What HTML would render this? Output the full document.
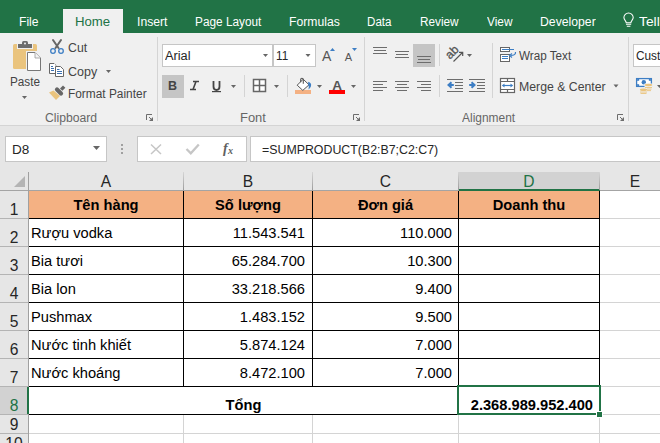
<!DOCTYPE html><html><head><meta charset="utf-8"><style>
*{margin:0;padding:0;box-sizing:border-box}
html,body{width:660px;height:443px;overflow:hidden;background:#fff;font-family:"Liberation Sans",sans-serif}
.a{position:absolute}
.lb{position:absolute;white-space:nowrap;line-height:1;transform-origin:0 0}
.ct{position:absolute;font-size:14.67px;color:#000;white-space:nowrap;line-height:1}
svg{position:absolute;left:0;top:0;overflow:visible}
.hdr{position:absolute;background:#e6e6e6}
.hl{position:absolute;background:#c6c6c6}
.gl{position:absolute;background:#d4d4d4}
.bl{position:absolute;background:#000}
</style></head><body>
<div class="a" style="left:0;top:0;width:660px;height:33px;background:#217346"></div>
<div class="a" style="left:63px;top:9px;width:60px;height:24px;background:#f0f0f0"></div>
<div class="a" style="left:0;top:33px;width:660px;height:92px;background:#f0f0f0"></div>
<div class="a" style="left:0;top:125px;width:660px;height:1px;background:#d4d4d4"></div>
<div class="a" style="left:0;top:126px;width:660px;height:46px;background:#e6e6e6"></div>
<div class="a" style="left:162px;top:44px;width:111px;height:23px;background:#fff;border:1px solid #c6c6c6"></div>
<div class="a" style="left:273px;top:44px;width:43px;height:23px;background:#fff;border:1px solid #c6c6c6"></div>
<div class="a" style="left:633px;top:44px;width:48px;height:23px;background:#fff;border:1px solid #c6c6c6"></div>
<div class="a" style="left:162px;top:75px;width:22px;height:23px;background:#c5c5c5"></div>
<div class="a" style="left:413px;top:44px;width:22px;height:23px;background:#c5c5c5"></div>
<div class="a" style="left:157px;top:37px;width:1px;height:84px;background:#d4d4d4"></div>
<div class="a" style="left:364px;top:37px;width:1px;height:84px;background:#d4d4d4"></div>
<div class="a" style="left:628px;top:37px;width:1px;height:84px;background:#d4d4d4"></div>
<div class="a" style="left:244px;top:75px;width:1px;height:22px;background:#d4d4d4"></div>
<div class="a" style="left:287px;top:75px;width:1px;height:22px;background:#d4d4d4"></div>
<div class="a" style="left:439px;top:44px;width:1px;height:22px;background:#d4d4d4"></div>
<div class="a" style="left:439px;top:75px;width:1px;height:22px;background:#d4d4d4"></div>
<div class="a" style="left:492px;top:43px;width:1px;height:55px;background:#d4d4d4"></div>
<div class="a" style="left:5px;top:136px;width:102px;height:26px;background:#fff;border:1px solid #c6c6c6"></div>
<div class="a" style="left:137px;top:136px;width:110px;height:26px;background:#fff;border:1px solid #c6c6c6"></div>
<div class="a" style="left:250px;top:136px;width:431px;height:26px;background:#fff;border:1px solid #c6c6c6"></div>
<div class="lb" style="left:19.33px;top:16px;font-size:12.5px;font-weight:normal;color:#fff;transform:scaleX(0.9722)">File</div>
<div class="lb" style="left:75.45px;top:16px;font-size:12.5px;font-weight:normal;color:#217346;transform:scaleX(1.0548)">Home</div>
<div class="lb" style="left:137.32px;top:16px;font-size:12.5px;font-weight:normal;color:#fff;transform:scaleX(0.9759)">Insert</div>
<div class="lb" style="left:195.45px;top:16px;font-size:12.5px;font-weight:normal;color:#fff;transform:scaleX(0.9456)">Page Layout</div>
<div class="lb" style="left:289.23px;top:16px;font-size:12.5px;font-weight:normal;color:#fff;transform:scaleX(0.9740)">Formulas</div>
<div class="lb" style="left:367.47px;top:16px;font-size:12.5px;font-weight:normal;color:#fff;transform:scaleX(0.9280)">Data</div>
<div class="lb" style="left:420.46px;top:16px;font-size:12.5px;font-weight:normal;color:#fff;transform:scaleX(0.9410)">Review</div>
<div class="lb" style="left:486.90px;top:16px;font-size:12.5px;font-weight:normal;color:#fff;transform:scaleX(0.9462)">View</div>
<div class="lb" style="left:539.72px;top:16px;font-size:12.5px;font-weight:normal;color:#fff;transform:scaleX(0.9782)">Developer</div>
<div class="lb" style="left:639.20px;top:16px;font-size:12.5px;font-weight:normal;color:#fff;transform:scaleX(1.1059)">Tell</div>
<div class="lb" style="left:68.22px;top:42px;font-size:12.5px;font-weight:normal;color:#444;transform:scaleX(0.9833)">Cut</div>
<div class="lb" style="left:68.00px;top:66px;font-size:12.5px;font-weight:normal;color:#444;transform:scaleX(1.0000)">Copy</div>
<div class="lb" style="left:68.05px;top:88px;font-size:12.5px;font-weight:normal;color:#444;transform:scaleX(0.9506)">Format Painter</div>
<div class="lb" style="left:10.36px;top:76px;font-size:12.5px;font-weight:normal;color:#444;transform:scaleX(0.9400)">Paste</div>
<div class="lb" style="left:44.63px;top:112px;font-size:12.5px;font-weight:normal;color:#666;transform:scaleX(0.9745)">Clipboard</div>
<div class="lb" style="left:240.17px;top:112px;font-size:12.5px;font-weight:normal;color:#666;transform:scaleX(1.0348)">Font</div>
<div class="lb" style="left:462.10px;top:112px;font-size:12.5px;font-weight:normal;color:#666;transform:scaleX(0.9564)">Alignment</div>
<div class="lb" style="left:518.80px;top:50px;font-size:12.5px;font-weight:normal;color:#444;transform:scaleX(0.9345)">Wrap Text</div>
<div class="lb" style="left:518.52px;top:81px;font-size:12.5px;font-weight:normal;color:#444;transform:scaleX(0.9826)">Merge &amp; Center</div>
<div class="lb" style="left:165.10px;top:50px;font-size:12.5px;font-weight:normal;color:#262626;transform:scaleX(1.0217)">Arial</div>
<div class="lb" style="left:275.76px;top:50px;font-size:12.5px;font-weight:normal;color:#262626;transform:scaleX(0.9364)">11</div>
<div class="lb" style="left:636.35px;top:50px;font-size:12.5px;font-weight:normal;color:#262626;transform:scaleX(0.9458)">Cust</div>
<div class="lb" style="left:11.71px;top:144px;font-size:12.5px;font-weight:normal;color:#262626;transform:scaleX(1.0857)">D8</div>
<div class="lb" style="left:262.00px;top:144px;font-size:12.5px;font-weight:normal;color:#262626;transform:scaleX(0.9887)">=SUMPRODUCT(B2:B7;C2:C7)</div>
<svg width="660" height="443" style="z-index:2"><polygon points="22,96 27,96 24.5,99" fill="#666"/><polygon points="106,70 111,70 108.5,73" fill="#666"/><polygon points="263,54 268,54 265.5,57" fill="#666"/><polygon points="305.5,54 310.5,54 308.0,57" fill="#666"/><polygon points="231,85 236,85 233.5,88" fill="#666"/><polygon points="274,85 279,85 276.5,88" fill="#666"/><polygon points="317,85 322,85 319.5,88" fill="#666"/><polygon points="351,85 356,85 353.5,88" fill="#666"/><polygon points="467,54 472,54 469.5,57" fill="#666"/><polygon points="613.5,84.5 618.5,84.5 616.0,87.5" fill="#666"/><polygon points="657,85 662,85 659.5,88" fill="#666"/><polygon points="93,146 100,146 96.5,150" fill="#666"/><rect x="13" y="44" width="24" height="25" rx="1.5" fill="#eac47e"/><rect x="17" y="43" width="16" height="6" fill="#f0f0f0"/><rect x="18" y="44" width="14" height="4" fill="#6d6d6d"/><rect x="22" y="41" width="6" height="5" rx="1.5" fill="#6d6d6d"/><circle cx="25" cy="43.5" r="1" fill="#f0f0f0"/><rect x="26" y="51" width="17" height="21" fill="#f0f0f0"/><path d="M27.5,52.5 H35 L40.5,58 V70.5 H27.5 Z" fill="#fff" stroke="#777"/><path d="M35,52.5 V58 H40.5" fill="#f4f4f4" stroke="#999" stroke-width="0.8"/><path d="M53,40 L58.5,48 M61,40 L55.5,48" stroke="#666" stroke-width="2" stroke-linecap="round"/><circle cx="53" cy="51" r="2.3" fill="none" stroke="#3d7ec4" stroke-width="1.3"/><circle cx="61" cy="51" r="2.3" fill="none" stroke="#3d7ec4" stroke-width="1.3"/><path d="M49.5,63.5 H54 L56,65.5 M49.5,63.5 V73.5 H55" fill="none" stroke="#666"/><rect x="50" y="64" width="5" height="9" fill="#fff"/><path d="M55.5,66.5 H60.5 L63.5,69.5 V76.5 H55.5 Z" fill="#fff" stroke="#666"/><path d="M51,66.5 H53 M51,68.5 H54 M51,70.5 H54 M57,69.5 H59.5 M57,71.5 H62 M57,73.5 H62" stroke="#3a6fb0" stroke-width="1"/><polygon points="49,92.5 53.5,90.5 60,96 56,100" fill="#eac47e"/><path d="M57,89.5 L61,93.5" stroke="#666" stroke-width="4.2" stroke-linecap="round"/><path d="M61.2,89.6 L64.2,86.6" stroke="#666" stroke-width="3.4" stroke-linecap="butt"/><path d="M253.5,79.5 H265.5 V91.5 H253.5 Z M259.5,79.5 V91.5 M253.5,85.5 H265.5" fill="#fff" stroke="#666" stroke-width="1.5"/><rect x="295" y="90" width="16" height="4" fill="#f4b183"/><polygon points="297.2,85.2 303.2,79.2 309,84.8 302.8,90.4" fill="#fff" stroke="#555" stroke-width="1"/><path d="M300.7,82.3 V79.4 Q300.7,78.2 301.9,78.2 Q303.3,78.2 303.3,79.4 V83.8" fill="none" stroke="#555" stroke-width="1.1"/><path d="M308.2,81.8 Q312,82.8 310.9,86.6 Q310.3,88.2 308.5,89.5 Q309.4,86.2 308.2,85 Z" fill="#3d7ec4"/><rect x="329" y="90" width="16" height="4" fill="#f00"/><text x="332.3" y="89.7" font-family="Liberation Sans" font-weight="bold" font-size="13.5" fill="#555">A</text><text x="322" y="60.7" font-family="Liberation Sans" font-size="14" fill="#555">A</text><polygon points="330,51 335,51 332.5,48" fill="#3d7ec4"/><text x="344.8" y="60.7" font-family="Liberation Sans" font-size="11" fill="#555">A</text><polygon points="352,48 357,48 354.5,51" fill="#3d7ec4"/><rect x="373" y="47" width="14" height="1" fill="#6d6d6d"/><rect x="374" y="50" width="12" height="1" fill="#6d6d6d"/><rect x="373" y="53" width="14" height="1" fill="#6d6d6d"/><rect x="395" y="51" width="14" height="1" fill="#6d6d6d"/><rect x="396" y="54" width="12" height="1" fill="#6d6d6d"/><rect x="395" y="57" width="14" height="1" fill="#6d6d6d"/><rect x="417" y="56" width="14" height="1" fill="#6d6d6d"/><rect x="418" y="59" width="12" height="1" fill="#6d6d6d"/><rect x="417" y="62" width="14" height="1" fill="#6d6d6d"/><rect x="373" y="81" width="14" height="1" fill="#6d6d6d"/><rect x="395" y="81" width="14" height="1" fill="#6d6d6d"/><rect x="417" y="81" width="14" height="1" fill="#6d6d6d"/><rect x="373" y="84" width="10" height="1" fill="#6d6d6d"/><rect x="397" y="84" width="10" height="1" fill="#6d6d6d"/><rect x="421" y="84" width="10" height="1" fill="#6d6d6d"/><rect x="373" y="87" width="14" height="1" fill="#6d6d6d"/><rect x="395" y="87" width="14" height="1" fill="#6d6d6d"/><rect x="417" y="87" width="14" height="1" fill="#6d6d6d"/><rect x="373" y="90" width="10" height="1" fill="#6d6d6d"/><rect x="397" y="90" width="10" height="1" fill="#6d6d6d"/><rect x="421" y="90" width="10" height="1" fill="#6d6d6d"/><rect x="447" y="79" width="16" height="1" fill="#6d6d6d"/><rect x="447" y="91" width="16" height="1" fill="#6d6d6d"/><rect x="455" y="82" width="8" height="1" fill="#6d6d6d"/><rect x="455" y="85" width="8" height="1" fill="#6d6d6d"/><rect x="455" y="88" width="8" height="1" fill="#6d6d6d"/><rect x="469" y="79" width="16" height="1" fill="#6d6d6d"/><rect x="469" y="91" width="16" height="1" fill="#6d6d6d"/><rect x="477" y="82" width="8" height="1" fill="#6d6d6d"/><rect x="477" y="85" width="8" height="1" fill="#6d6d6d"/><rect x="477" y="88" width="8" height="1" fill="#6d6d6d"/><path d="M453.8,85 H449 M451.5,82.2 L448.5,85 L451.5,87.8" fill="none" stroke="#3d7ec4" stroke-width="2"/><path d="M469.2,85 H474 M471.5,82.2 L474.5,85 L471.5,87.8" fill="none" stroke="#3d7ec4" stroke-width="2"/><text x="0" y="0" font-family="Liberation Sans" font-size="12" fill="#555" stroke="#555" stroke-width="0.35" transform="translate(450.1,59.7) rotate(-45)">ab</text><path d="M453.5,61.5 L462.5,52.5 M459,52.3 H462.7 V56" fill="none" stroke="#555" stroke-width="1.2"/><rect x="500.5" y="47.5" width="9" height="4" fill="#fff" stroke="#666"/><rect x="500.5" y="54.5" width="9" height="7" fill="#fff" stroke="#666"/><rect x="502" y="49" width="12" height="1" fill="#3d7ec4"/><rect x="502" y="56" width="6" height="1" fill="#3d7ec4"/><rect x="502" y="58" width="6" height="1" fill="#3d7ec4"/><path d="M515.5,52 Q516,55.5 510.5,55.5" fill="none" stroke="#3d7ec4" stroke-width="1.2"/><path d="M512,53.5 L509.5,55.5 L512,57.5" fill="none" stroke="#3d7ec4" stroke-width="1.2"/><rect x="500.5" y="78.5" width="14" height="14" fill="#fff" stroke="#666" stroke-width="1.2"/><path d="M500.5,81.5 H514.5 M500.5,89.5 H514.5 M507.5,78.5 V81.5 M507.5,89.5 V92.5" stroke="#666" stroke-width="1.2"/><path d="M502.5,85.5 H512.5" stroke="#3d7ec4" stroke-width="1.2"/><polygon points="502,85.5 504.5,83.5 504.5,87.5" fill="#3d7ec4"/><polygon points="513,85.5 510.5,83.5 510.5,87.5" fill="#3d7ec4"/><rect x="636.6" y="78.6" width="14.8" height="7.8" fill="#fff" stroke="#3d7ec4" stroke-width="1.3"/><path d="M637,80 h1.5 v-1 M651,80 h-1.5 v-1 M637,85 h1.5 v1 M651,85 h-1.5 v1" stroke="#3d7ec4" stroke-width="1.3" fill="none"/><circle cx="643.8" cy="82.3" r="2.2" fill="#3d7ec4"/><rect x="644.5" y="83.5" width="8" height="8" fill="#f0f0f0"/><ellipse cx="648.5" cy="85" rx="3.6" ry="1.2" fill="#eac47e"/><rect x="645" y="87" width="7" height="0.9" fill="#eac47e"/><rect x="645.5" y="88.6" width="6" height="0.9" fill="#eac47e"/><rect x="646" y="90.2" width="5" height="0.9" fill="#eac47e"/><rect x="639" y="88" width="8" height="7" fill="#f0f0f0"/><ellipse cx="643.5" cy="89.8" rx="3.6" ry="1.2" fill="#eac47e"/><rect x="640" y="91.6" width="7" height="0.9" fill="#eac47e"/><rect x="640.5" y="93.1" width="6" height="0.9" fill="#eac47e"/><path d="M626.2,22.8 C626.2,20.8 623.9,19.8 623.9,17.6 A4.65,4.65 0 1 1 633.2,17.6 C633.2,19.8 630.9,20.8 630.9,22.8 Z" fill="none" stroke="#fff" stroke-width="1.05"/><path d="M626,24.3 H631.2 M626.8,26.3 H630.4" stroke="#fff" stroke-width="1.1"/><path d="M146.5,120 V114.5 H152" fill="none" stroke="#6d6d6d" stroke-width="1"/><path d="M149,117 L152.5,120.5" stroke="#6d6d6d" stroke-width="1"/><polygon points="149,121 153,121 153,117" fill="#6d6d6d"/><path d="M353.5,120 V114.5 H359" fill="none" stroke="#6d6d6d" stroke-width="1"/><path d="M356,117 L359.5,120.5" stroke="#6d6d6d" stroke-width="1"/><polygon points="356,121 360,121 360,117" fill="#6d6d6d"/><path d="M617.5,120 V114.5 H623" fill="none" stroke="#6d6d6d" stroke-width="1"/><path d="M620,117 L623.5,120.5" stroke="#6d6d6d" stroke-width="1"/><polygon points="620,121 624,121 624,117" fill="#6d6d6d"/><rect x="121" y="144" width="2" height="2" fill="#a0a0a0"/><rect x="121" y="148" width="2" height="2" fill="#a0a0a0"/><rect x="121" y="152" width="2" height="2" fill="#a0a0a0"/><path d="M151,144.5 L161,154 M161,144.5 L151,154" stroke="#c6c6c6" stroke-width="1.5"/><path d="M186.5,149 L190.8,153.3 L198.8,144.5" fill="none" stroke="#c6c6c6" stroke-width="2.3"/><text x="223" y="153" font-family="Liberation Serif" font-style="italic" font-weight="bold" font-size="14" fill="#606060">f</text><text x="228" y="154" font-family="Liberation Serif" font-style="italic" font-weight="bold" font-size="10" fill="#606060">x</text><text x="168" y="90" font-family="Liberation Sans" font-weight="bold" font-size="12.5" fill="#444">B</text><path d="M193,81.5 H199 M190,89.5 H196 M196,81.5 L193,89.5" stroke="#444" stroke-width="1.6" fill="none"/><path d="M213.5,81 V86.5 Q213.5,90 216.5,90 Q219.5,90 219.5,86.5 V81" fill="none" stroke="#444" stroke-width="1.8"/><rect x="212" y="91" width="9" height="1.2" fill="#444"/></svg>
<div class="a" style="left:0;top:172px;width:660px;height:271px;background:#fff"></div>
<div class="hdr" style="left:0;top:172px;width:660px;height:18px"></div>
<div class="hdr" style="left:0;top:172px;width:28px;height:271px"></div>
<div class="hdr" style="left:459px;top:172px;width:141px;height:18px;background:#d2d2d2"></div>
<div class="hdr" style="left:0;top:387px;width:27px;height:27px;background:#d2d2d2"></div>
<div class="gl" style="left:183px;top:415px;width:1px;height:28px"></div>
<div class="gl" style="left:312px;top:415px;width:1px;height:28px"></div>
<div class="gl" style="left:458px;top:415px;width:1px;height:28px"></div>
<div class="gl" style="left:599px;top:415px;width:1px;height:28px"></div>
<div class="gl" style="left:619px;top:191px;width:0px;height:0px"></div>
<div class="gl" style="left:29px;top:433px;width:631px;height:1px"></div>
<div class="gl" style="left:600px;top:218px;width:60px;height:1px"></div>
<div class="gl" style="left:600px;top:246px;width:60px;height:1px"></div>
<div class="gl" style="left:600px;top:274px;width:60px;height:1px"></div>
<div class="gl" style="left:600px;top:302px;width:60px;height:1px"></div>
<div class="gl" style="left:600px;top:330px;width:60px;height:1px"></div>
<div class="gl" style="left:600px;top:358px;width:60px;height:1px"></div>
<div class="gl" style="left:600px;top:386px;width:60px;height:1px"></div>
<div class="gl" style="left:600px;top:414px;width:60px;height:1px"></div>
<div class="gl" style="left:600px;top:433px;width:60px;height:1px"></div>
<div class="a" style="left:29px;top:191px;width:570px;height:27px;background:#f4b183"></div>
<div class="bl" style="left:29px;top:218px;width:571px;height:1px"></div>
<div class="bl" style="left:29px;top:246px;width:571px;height:1px"></div>
<div class="bl" style="left:29px;top:274px;width:571px;height:1px"></div>
<div class="bl" style="left:29px;top:302px;width:571px;height:1px"></div>
<div class="bl" style="left:29px;top:330px;width:571px;height:1px"></div>
<div class="bl" style="left:29px;top:358px;width:571px;height:1px"></div>
<div class="bl" style="left:29px;top:386px;width:571px;height:1px"></div>
<div class="bl" style="left:29px;top:414px;width:571px;height:1px"></div>
<div class="bl" style="left:183px;top:191px;width:1px;height:195px"></div>
<div class="bl" style="left:312px;top:191px;width:1px;height:195px"></div>
<div class="bl" style="left:458px;top:191px;width:1px;height:195px"></div>
<div class="bl" style="left:599px;top:191px;width:1px;height:195px"></div>
<div class="bl" style="left:458px;top:386px;width:1px;height:29px"></div>
<div class="bl" style="left:599px;top:386px;width:1px;height:29px"></div>
<div class="hl" style="left:0;top:190px;width:660px;height:1px;background:#a4a4a4"></div>
<div class="hl" style="left:459px;top:189px;width:141px;height:2px;background:#217346"></div>
<div class="hl" style="left:183px;top:172px;width:1px;height:18px;background:linear-gradient(#d6d6d6,#9c9c9c)"></div>
<div class="hl" style="left:312px;top:172px;width:1px;height:18px;background:linear-gradient(#d6d6d6,#9c9c9c)"></div>
<div class="hl" style="left:458px;top:172px;width:1px;height:18px;background:linear-gradient(#d6d6d6,#9c9c9c)"></div>
<div class="hl" style="left:599px;top:172px;width:1px;height:18px;background:linear-gradient(#d6d6d6,#9c9c9c)"></div>
<div class="hl" style="left:28px;top:172px;width:1px;height:271px;background:#a0a0a0"></div>
<div class="hl" style="left:0;top:218px;width:28px;height:1px;background:#b4b4b4"></div>
<div class="hl" style="left:0;top:246px;width:28px;height:1px;background:#b4b4b4"></div>
<div class="hl" style="left:0;top:274px;width:28px;height:1px;background:#b4b4b4"></div>
<div class="hl" style="left:0;top:302px;width:28px;height:1px;background:#b4b4b4"></div>
<div class="hl" style="left:0;top:330px;width:28px;height:1px;background:#b4b4b4"></div>
<div class="hl" style="left:0;top:358px;width:28px;height:1px;background:#b4b4b4"></div>
<div class="hl" style="left:0;top:386px;width:28px;height:1px;background:#b4b4b4"></div>
<div class="hl" style="left:0;top:414px;width:28px;height:1px;background:#b4b4b4"></div>
<div class="hl" style="left:0;top:433px;width:28px;height:1px;background:#b4b4b4"></div>
<div class="hl" style="left:27px;top:387px;width:2px;height:27px;background:#217346"></div>
<svg style="left:0;top:172px" width="28" height="18"><polygon points="25,4 25,15 14,15" fill="#b4b4b4"/></svg>
<div class="ct" style="left:29px;width:154px;top:174px;text-align:center;color:#262626;font-size:15.6px">A</div>
<div class="ct" style="left:184px;width:128px;top:174px;text-align:center;color:#262626;font-size:15.6px">B</div>
<div class="ct" style="left:313px;width:145px;top:174px;text-align:center;color:#262626;font-size:15.6px">C</div>
<div class="ct" style="left:459px;width:140px;top:174px;text-align:center;color:#217346;font-size:15.6px">D</div>
<div class="ct" style="left:600px;width:70px;top:174px;text-align:center;color:#262626;font-size:15.6px">E</div>
<div class="ct" style="left:0;width:28px;top:202px;text-align:center;color:#262626;font-size:15.6px">1</div>
<div class="ct" style="left:0;width:28px;top:230px;text-align:center;color:#262626;font-size:15.6px">2</div>
<div class="ct" style="left:0;width:28px;top:258px;text-align:center;color:#262626;font-size:15.6px">3</div>
<div class="ct" style="left:0;width:28px;top:286px;text-align:center;color:#262626;font-size:15.6px">4</div>
<div class="ct" style="left:0;width:28px;top:314px;text-align:center;color:#262626;font-size:15.6px">5</div>
<div class="ct" style="left:0;width:28px;top:342px;text-align:center;color:#262626;font-size:15.6px">6</div>
<div class="ct" style="left:0;width:28px;top:370px;text-align:center;color:#262626;font-size:15.6px">7</div>
<div class="ct" style="left:0;width:28px;top:398px;text-align:center;color:#217346;font-size:15.6px">8</div>
<div class="ct" style="left:0;width:28px;top:417px;text-align:center;color:#262626;font-size:15.6px">9</div>
<div class="ct" style="left:0;width:28px;top:436px;text-align:center;color:#262626;font-size:15.6px">10</div>
<div class="ct" style="left:29px;width:154px;top:198px;text-align:center;font-weight:bold">Tên hàng</div>
<div class="ct" style="left:184px;width:128px;top:198px;text-align:center;font-weight:bold">Số lượng</div>
<div class="ct" style="left:313px;width:145px;top:198px;text-align:center;font-weight:bold">Đơn giá</div>
<div class="ct" style="left:459px;width:140px;top:198px;text-align:center;font-weight:bold">Doanh thu</div>
<div class="ct" style="left:31px;top:226px">Rượu vodka</div>
<div class="ct" style="left:184px;width:121px;top:226px;text-align:right">11.543.541</div>
<div class="ct" style="left:313px;width:139px;top:226px;text-align:right">110.000</div>
<div class="ct" style="left:31px;top:254px">Bia tươi</div>
<div class="ct" style="left:184px;width:121px;top:254px;text-align:right">65.284.700</div>
<div class="ct" style="left:313px;width:139px;top:254px;text-align:right">10.300</div>
<div class="ct" style="left:31px;top:282px">Bia lon</div>
<div class="ct" style="left:184px;width:121px;top:282px;text-align:right">33.218.566</div>
<div class="ct" style="left:313px;width:139px;top:282px;text-align:right">9.400</div>
<div class="ct" style="left:31px;top:310px">Pushmax</div>
<div class="ct" style="left:184px;width:121px;top:310px;text-align:right">1.483.152</div>
<div class="ct" style="left:313px;width:139px;top:310px;text-align:right">9.500</div>
<div class="ct" style="left:31px;top:338px">Nước tinh khiết</div>
<div class="ct" style="left:184px;width:121px;top:338px;text-align:right">5.874.124</div>
<div class="ct" style="left:313px;width:139px;top:338px;text-align:right">7.000</div>
<div class="ct" style="left:31px;top:366px">Nước khoáng</div>
<div class="ct" style="left:184px;width:121px;top:366px;text-align:right">8.472.100</div>
<div class="ct" style="left:313px;width:139px;top:366px;text-align:right">7.000</div>
<div class="ct" style="left:29px;width:429px;top:398px;text-align:center;font-weight:bold">Tổng</div>
<div class="ct" style="left:459px;width:134px;top:398px;text-align:right;font-weight:bold">2.368.989.952.400</div>
<div class="a" style="left:457px;top:385px;width:144px;height:30px;border:2px solid #217346"></div>
<div class="a" style="left:596px;top:411px;width:7px;height:7px;background:#217346;border:1px solid #fff"></div>
</body></html>
